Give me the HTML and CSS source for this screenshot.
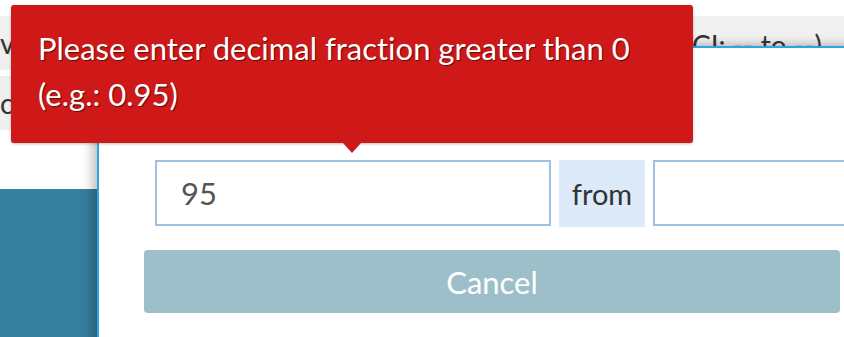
FILE: index.html
```html
<!DOCTYPE html>
<html>
<head>
<meta charset="utf-8">
<link rel="stylesheet" href="styles.css">
</head>
<body>
<div class="page">
  <div class="row row-first">
    <span class="row-text left-cut">v</span>
    <span class="row-text right-text">(CI: -- to --)</span>
  </div>
  <div class="row row-second">
    <span class="row-text left-cut">c</span>
  </div>
  <div class="side-panel"></div>

  <div class="modal">
    <div class="input-row">
      <div class="field field-main">95</div>
      <div class="addon">from</div>
      <div class="field field-second"></div>
    </div>
    <button class="cancel-btn">Cancel</button>
  </div>

  <div class="tooltip">
    <p class="tooltip-text">Please enter decimal fraction greater than 0 (e.g.: 0.95)</p>
  </div>
</div>
</body>
</html>
```

FILE: styles.css
```css
html, body {
  margin: 0;
  padding: 0;
  background: #ffffff;
}

.page {
  position: relative;
  width: 844px;
  height: 337px;
  overflow: hidden;
  font-family: "Lato", "Noto Sans", sans-serif;
  font-variant-ligatures: none;
  display: flex;
  flex-direction: column;
}

.row {
  height: 54px;
  background: #efefef;
  display: flex;
  align-items: center;
  justify-content: space-between;
  flex-shrink: 0;
}

.row-first {
  margin-top: 16px;
  background: linear-gradient(to bottom, #f0f0f0 0, #f0f0f0 22px, #e4e4e4 30px, #efefef 36px);
}

.row-second {
  margin-top: 6px;
}

.row-text {
  font-size: 28px;
  color: #333333;
}

.left-cut {
  margin-left: 0;
}

.right-text {
  margin-right: 22px;
  position: relative;
  top: 2px;
}

.side-panel {
  margin-top: 59px;
  width: 97px;
  flex: 1;
  background: #357f9f;
}

.modal {
  position: absolute;
  left: 97px;
  top: 46px;
  width: 800px;
  height: 400px;
  background: #ffffff;
  border-left: 2px solid #2aa7dd;
  border-top: 2px solid #2aa7dd;
  box-shadow: -5px 0 10px rgba(0, 0, 0, 0.25);
  padding: 112px 0 0 45px;
  box-sizing: border-box;
}

.input-row {
  display: flex;
  gap: 8px;
  margin-left: 11px;
  height: 66px;
}

.field {
  flex-shrink: 0;
  box-sizing: border-box;
  height: 66px;
  border: 2px solid #a0c0e2;
  background: #ffffff;
  font-size: 31px;
  color: #555555;
  display: flex;
  align-items: center;
  padding-left: 24px;
}

.field-main {
  width: 396px;
}

.field-second {
  width: 220px;
}

.addon {
  flex-shrink: 0;
  width: 86px;
  height: 67px;
  background: #ddeaf9;
  color: #333333;
  font-size: 29px;
  display: flex;
  align-items: center;
  justify-content: center;
}

.cancel-btn {
  display: block;
  margin-top: 24px;
  width: 696px;
  height: 63px;
  border: none;
  border-radius: 4px;
  background: #9dbfca;
  color: #ffffff;
  font-family: "Lato", "Noto Sans", sans-serif;
  font-size: 31px;
  padding: 0;
}

.tooltip {
  position: absolute;
  left: 11px;
  top: 5px;
  width: 682px;
  height: 138px;
  box-sizing: border-box;
  background: #cf1818;
  border-radius: 3px;
  padding: 20px 27px 0 27px;
  box-shadow: 0 1px 3px rgba(0, 0, 0, 0.25);
}

.tooltip::after {
  content: "";
  position: absolute;
  left: 332px;
  bottom: -10px;
  border-left: 9px solid transparent;
  border-right: 9px solid transparent;
  border-top: 10px solid #cf1818;
}

.tooltip-text {
  margin: 0;
  color: #ffffff;
  font-size: 31px;
  line-height: 46px;
  width: 620px;
  text-shadow: 1px 1px 1px rgba(0, 0, 0, 0.55);
}
```
